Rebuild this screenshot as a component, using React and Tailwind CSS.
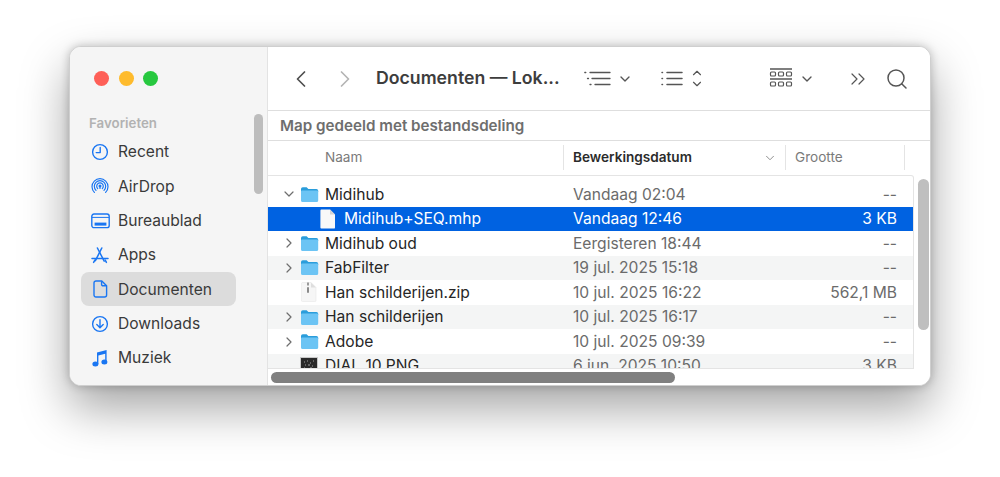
import React from 'react';
import { ChevronLeft, ChevronRight, ChevronDown, ChevronUp, ChevronsRight, Search } from 'lucide-react';

const BLUE = '#1a76f2';

const ClockIcon = () => (
  <svg width="18" height="18" viewBox="0 0 18 18" fill="none" stroke={BLUE} strokeWidth="1.4" strokeLinecap="round" strokeLinejoin="round">
    <circle cx="9" cy="9" r="7.4" />
    <path d="M9.2 4.4V9.6H5.2" />
  </svg>
);

const AirDropIcon = () => (
  <svg width="18" height="18" viewBox="0 0 18 18" fill="none" stroke={BLUE} strokeWidth="1.2" strokeLinecap="round">
    <path d="M3.4 15.4a8 8 0 1 1 11.2 0" />
    <path d="M5 13.4a5.7 5.7 0 1 1 8 0" />
    <path d="M6.7 11.6a3.3 3.3 0 1 1 4.6 0" />
    <circle cx="9" cy="9" r="0.9" fill={BLUE} />
    <path d="M9 10v1.4" />
  </svg>
);

const DesktopIcon = () => (
  <svg width="19" height="16" viewBox="0 0 19 16" fill="none">
    <rect x="0.8" y="1" width="17.4" height="13.6" rx="2.2" stroke={BLUE} strokeWidth="1.4" />
    <path d="M1 4.4H18" stroke={BLUE} strokeWidth="1" />
    <rect x="3.6" y="9.6" width="11.8" height="3" fill={BLUE} />
  </svg>
);

const AppsIcon = () => (
  <svg width="18" height="17" viewBox="0 0 18 17" fill="none" stroke={BLUE} strokeWidth="1.5" strokeLinecap="round">
    <path d="M6.4 1 13.2 14.2" />
    <path d="M10.8 1 9.2 4.2 4.4 13.6" />
    <path d="M1 11.6H17" />
    <path d="M2.6 15.4 4 13" />
    <path d="M14.2 13 15.4 15.4" />
  </svg>
);

const DocIcon = () => (
  <svg width="15" height="18" viewBox="0 0 15 18" fill="none" stroke={BLUE} strokeWidth="1.4" strokeLinejoin="round">
    <path d="M3 1H8.8L13.6 5.8V15A2 2 0 0 1 11.6 17H3A2 2 0 0 1 1 15V3A2 2 0 0 1 3 1Z" />
    <path d="M8.6 1.2V4.4A1.4 1.4 0 0 0 10 5.8H13.4" />
  </svg>
);

const DownloadIcon = () => (
  <svg width="18" height="18" viewBox="0 0 18 18" fill="none" stroke={BLUE} strokeWidth="1.4" strokeLinecap="round" strokeLinejoin="round">
    <circle cx="9" cy="9" r="7.4" />
    <path d="M9 4.8V12.6M5.8 9.6 9 12.8 12.2 9.6" />
  </svg>
);

const MusicIcon = () => (
  <svg width="16" height="18" viewBox="0 0 16 18" fill={BLUE}>
    <path d="M5 3.4 14.6 1V13.2H13.2V4.8L6.4 6.4V15.2H5Z" />
    <ellipse cx="3.4" cy="15" rx="3" ry="2.5" />
    <ellipse cx="12.4" cy="13" rx="3" ry="2.5" />
  </svg>
);

const FolderSideIcon = () => (
  <svg width="18" height="15" viewBox="0 0 18 15" fill="none" stroke={BLUE} strokeWidth="1.4">
    <path d="M1 13V3A2 2 0 0 1 3 1H6.5L8.5 3H15A2 2 0 0 1 17 5V13A2 2 0 0 1 15 15H3A2 2 0 0 1 1 13Z" />
  </svg>
);

const FolderIcon = () => (
  <svg width="19" height="17" viewBox="0 0 19 17">
    <path d="M1 3A1.8 1.8 0 0 1 2.8 1.2H6.6L8.4 3H16.4A1.8 1.8 0 0 1 18.2 4.8V6H1Z" fill="#2a9ddb" />
    <path d="M1 5.4A1 1 0 0 1 2 4.4H17.2A1 1 0 0 1 18.2 5.4V14.4A1.6 1.6 0 0 1 16.6 16H2.6A1.6 1.6 0 0 1 1 14.4Z" fill="#6cc4f4" />
  </svg>
);

const FileIcon = () => (
  <svg width="16" height="20" viewBox="0 0 16 20">
    <path d="M1.4 0.5H10L15 5.5V18.4A1.2 1.2 0 0 1 13.8 19.6H1.4A1.2 1.2 0 0 1 0.4 18.4V1.6A1.2 1.2 0 0 1 1.4 0.5Z" fill="#f8f8f8" />
    <path d="M10 0.5V5.5H15Z" fill="#d4d4d4" />
  </svg>
);

const ZipIcon = () => (
  <svg width="16" height="20" viewBox="0 0 16 20">
    <path d="M1.4 0.5H10L15 5.5V18.4A1.2 1.2 0 0 1 13.8 19.6H1.4A1.2 1.2 0 0 1 0.4 18.4V1.6A1.2 1.2 0 0 1 1.4 0.5Z" fill="#f6f6f6" stroke="#e2e2e2" strokeWidth="0.5" />
    <path d="M10 0.5V5.5H15Z" fill="#dedede" />
    <rect x="6" y="0.5" width="2" height="3" fill="#9a9a9a" />
    <rect x="6" y="5" width="2" height="6" rx="1" fill="#8a8a8a" />
  </svg>
);

const PngIcon = () => (
  <svg width="18" height="19" viewBox="0 0 18 19">
    <rect x="0.5" y="0.5" width="17" height="18" fill="#2a2a2a" stroke="#c8c8c8" />
    <path d="M4 5h1M7 4h1M10 6h1M13 4h1M5 8h1M8 8h2M12 9h1M4 11h1M7 12h1M10 11h2M13 13h1M5 14h1M9 14h1" stroke="#a0a0a0" strokeWidth="1" />
  </svg>
);

const sidebarItems = [
  { label: 'Recent', icon: <ClockIcon /> },
  { label: 'AirDrop', icon: <AirDropIcon /> },
  { label: 'Bureaublad', icon: <DesktopIcon /> },
  { label: 'Apps', icon: <AppsIcon /> },
  { label: 'Documenten', icon: <DocIcon />, active: true },
  { label: 'Downloads', icon: <DownloadIcon /> },
  { label: 'Muziek', icon: <MusicIcon /> },
  { label: 'Films', icon: <FolderSideIcon /> },
];

const rows = [
  { name: 'Midihub', date: 'Vandaag 02:04', size: '--', icon: <FolderIcon />, open: true },
  { name: 'Midihub+SEQ.mhp', date: 'Vandaag 12:46', size: '3 KB', icon: <FileIcon />, selected: true, child: true },
  { name: 'Midihub oud', date: 'Eergisteren 18:44', size: '--', icon: <FolderIcon />, closed: true },
  { name: 'FabFilter', date: '19 jul. 2025 15:18', size: '--', icon: <FolderIcon />, closed: true, stripe: true },
  { name: 'Han schilderijen.zip', date: '10 jul. 2025 16:22', size: '562,1 MB', icon: <ZipIcon /> },
  { name: 'Han schilderijen', date: '10 jul. 2025 16:17', size: '--', icon: <FolderIcon />, closed: true, stripe: true },
  { name: 'Adobe', date: '10 jul. 2025 09:39', size: '--', icon: <FolderIcon />, closed: true },
  { name: 'DIAL_10.PNG', date: '6 jun. 2025 10:50', size: '3 KB', icon: <PngIcon />, stripe: true },
];

const Row = ({ r }) => (
  <div className={`flex items-center h-[24.55px] shrink-0 text-[15.6px] ${r.selected ? 'bg-[#0062e1] text-white' : r.stripe ? 'bg-[#f4f5f5]' : 'bg-white'}`}>
    <div className={`flex items-center w-[295px] shrink-0 ${r.selected ? 'text-white' : 'text-[#262626]'}`}>
      <div className="w-[31px] shrink-0 flex justify-end pr-[2px]">
        {r.open && <ChevronDown size={16} strokeWidth={1.8} className="text-[#6e6e6e]" />}
        {r.closed && <ChevronRight size={16} strokeWidth={1.8} className="text-[#6e6e6e]" />}
      </div>
      <div className={`flex items-center justify-center w-[20px] shrink-0 ${r.child ? 'ml-[19px]' : ''}`}>{r.icon}</div>
      <span className="ml-[6px] whitespace-nowrap">{r.name}</span>
    </div>
    <span className={`w-[200px] shrink-0 pl-[10px] whitespace-nowrap ${r.selected ? 'text-white' : 'text-[#6b6b6b]'}`}>{r.date}</span>
    <span className={`w-[134px] shrink-0 text-right whitespace-nowrap ${r.selected ? 'text-white' : 'text-[#6b6b6b]'}`}>{r.size}</span>
  </div>
);

export default function App() {
  return (
    <div className="w-[1000px] h-[477px] bg-white overflow-hidden pt-[46px] pl-[69px] [font-family:Inter,'Liberation_Sans',sans-serif]">
      <div className="flex w-[862px] h-[340px] rounded-[12px] overflow-hidden bg-white border border-[#cfcfcf] shadow-[0_22px_48px_rgba(0,0,0,0.36),0_0_10px_rgba(0,0,0,0.22)]">
        <aside className="relative w-[198px] shrink-0 bg-[#f5f5f5] border-r border-[#e3e3e3] overflow-hidden">
          <div className="flex gap-[9.5px] pl-[24px] pt-[24px]">
            <span className="w-[15px] h-[15px] rounded-full bg-[#fe5f57]" />
            <span className="w-[15px] h-[15px] rounded-full bg-[#febb2d]" />
            <span className="w-[15px] h-[15px] rounded-full bg-[#27c83f]" />
          </div>
          <div className="pl-[19px] mt-[29px] text-[13.3px] leading-[16px] font-semibold text-[#b2b2b2]">Favorieten</div>
          <div className="mt-[4px] px-[11px]">
            {sidebarItems.map((item) => (
              <div key={item.label} className={`flex items-center h-[34.3px] w-[155px] rounded-[8px] text-[15.6px] text-[#3a3a3a] ${item.active ? 'bg-[#dcdcdc]' : ''}`}>
                <div className="w-[37px] shrink-0 flex justify-center pl-[1px]">{item.icon}</div>
                <span>{item.label}</span>
              </div>
            ))}
          </div>
          <div className="absolute left-[184px] top-[67px] w-[9px] h-[80px] rounded-full bg-[#bdbdbd]" />
        </aside>

        <main className="relative flex-1 min-w-0 flex flex-col bg-white">
          <div className="flex items-center h-[64px] shrink-0 border-b border-[#dedede] text-[#4a4a4a]">
            <ChevronLeft size={28} strokeWidth={1.5} className="ml-[19px] text-[#4f4f4f]" />
            <ChevronRight size={28} strokeWidth={1.5} className="ml-[16px] text-[#b5b5b5]" />
            <span className="ml-[17px] w-[208px] text-[17.7px] font-semibold text-[#3d3d3d] whitespace-nowrap">Documenten — Lok...</span>
            <svg width="27" height="15" viewBox="0 0 27 15" fill="none" stroke="#555" strokeWidth="1.3" strokeLinecap="round">
              <path d="M0.8 1.5h1M6 1.5H26M3.5 7.5h1M8 7.5H26M6 13.5h1M11 13.5H26" />
            </svg>
            <ChevronDown size={16} strokeWidth={2} className="ml-[6px] text-[#555]" />
            <svg className="ml-[28px]" width="22" height="15" viewBox="0 0 22 15" fill="none" stroke="#555" strokeWidth="1.3" strokeLinecap="round">
              <path d="M1 1.5h.5M1 7.5h.5M1 13.5h.5M6 1.5H21M6 7.5H21M6 13.5H21" strokeWidth="1.5" />
            </svg>
            <div className="ml-[7px] flex flex-col text-[#555]">
              <ChevronUp size={14} strokeWidth={2} className="-mb-[3px]" />
              <ChevronDown size={14} strokeWidth={2} />
            </div>
            <svg className="ml-[65px]" width="24" height="21" viewBox="0 0 24 21" fill="none" stroke="#555" strokeWidth="1.2">
              <path d="M1 1H23M1 11H23" strokeWidth="1.3" />
              <rect x="1.5" y="4" width="5" height="4" rx="1" />
              <rect x="9.5" y="4" width="5" height="4" rx="1" />
              <rect x="17.5" y="4" width="5" height="4" rx="1" />
              <rect x="1.5" y="14" width="5" height="4" rx="1" />
              <rect x="9.5" y="14" width="5" height="4" rx="1" />
              <rect x="17.5" y="14" width="5" height="4" rx="1" />
            </svg>
            <ChevronDown size={16} strokeWidth={2} className="ml-[6px] text-[#555]" />
            <ChevronsRight size={24} strokeWidth={1.2} className="ml-[31px] text-[#555]" />
            <Search size={24} strokeWidth={1.5} className="ml-[15px] text-[#555]" />
          </div>

          <div className="flex items-center h-[30px] shrink-0 pl-[12px] pt-[2px] border-b border-[#dedede] text-[15.2px] font-semibold text-[#6e6e6e]">
            Map gedeeld met bestandsdeling
          </div>

          <div className="flex items-center h-[34px] shrink-0 pb-[1px] text-[13.6px] text-[#7a7a7a]">
            <div className="w-[296px] h-[25px] pl-[57px] flex items-center border-r border-[#e4e4e4] shrink-0">Naam</div>
            <div className="w-[222px] h-[25px] pl-[9px] pr-[8px] flex items-center justify-between border-r border-[#e4e4e4] shrink-0">
              <span className="font-semibold text-[#2b2b2b]">Bewerkingsdatum</span>
              <ChevronDown size={14} strokeWidth={1.4} className="text-[#777]" />
            </div>
            <div className="w-[119px] h-[25px] pl-[9px] flex items-center border-r border-[#e4e4e4] shrink-0">Grootte</div>
          </div>

          <div className="flex flex-col w-[646px] h-[194px] overflow-hidden pt-[6px] border-t border-r border-b border-[#e4e4e4] rounded-tr-[3px] bg-white">
            {rows.map((r) => (
              <Row key={r.name} r={r} />
            ))}
          </div>

          <div className="absolute left-[650px] top-[132px] w-[11px] h-[151px] rounded-full bg-[#bfbfbf]" />
          <div className="absolute left-[3px] top-[325px] w-[404px] h-[11px] rounded-full bg-[#808080]" />
        </main>
      </div>
    </div>
  );
}
